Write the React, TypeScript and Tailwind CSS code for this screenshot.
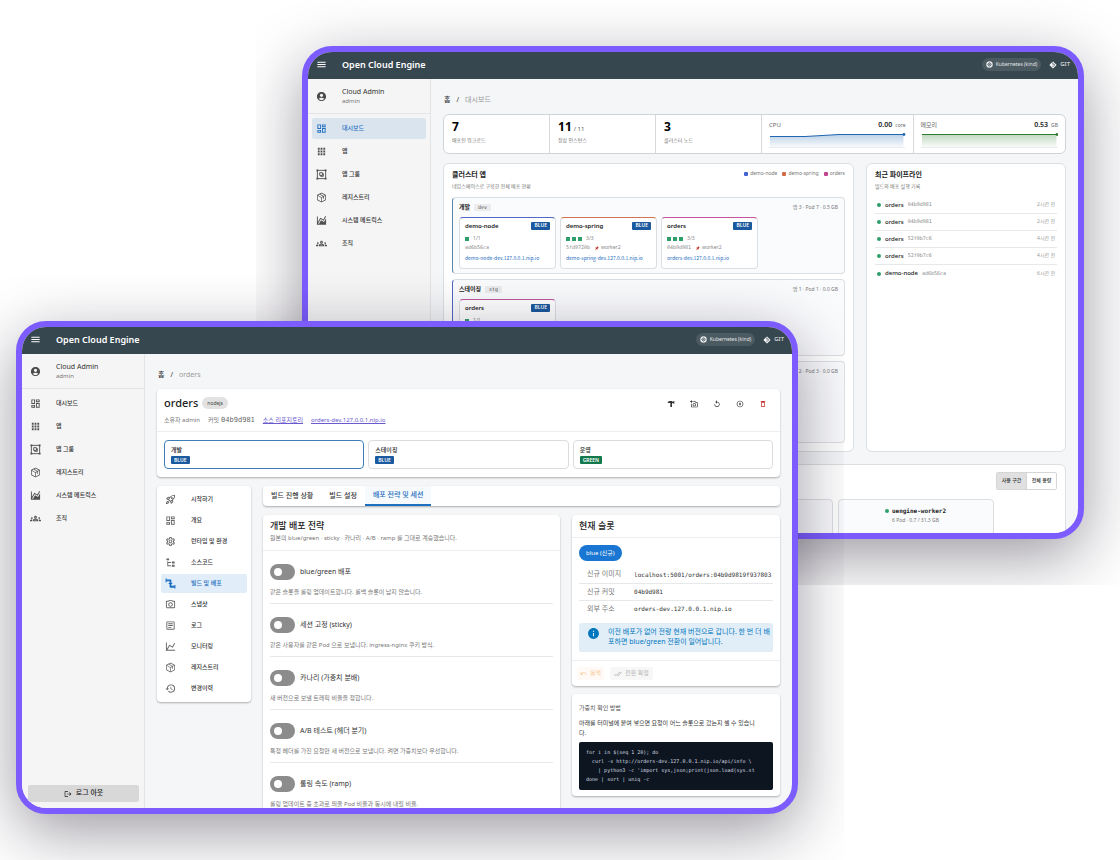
import type { ReactNode } from "react";
import { FaGitAlt } from "react-icons/fa";
import {
  MdAccountCircle,
  MdApps,
  MdDoneAll,
  MdHistory,
  MdInfo,
  MdLogout,
  MdMenu,
  MdOutlineAddAPhoto,
  MdOutlineArticle,
  MdOutlineDashboard,
  MdOutlineDelete,
  MdOutlineGroups,
  MdOutlinePhotoCamera,
  MdOutlineRocketLaunch,
  MdOutlineSettings,
  MdPauseCircleOutline,
  MdPushPin,
  MdReplay,
  MdUndo,
} from "react-icons/md";
import { PiPackage } from "react-icons/pi";

interface IconProps {
  size: number;
}

function PathIcon({ size, d }: IconProps & { d: string }) {
  return (
    <svg width={size} height={size} viewBox="0 0 24 24" fill="currentColor" aria-hidden="true">
      <path d={d} />
    </svg>
  );
}

const AreaIcon = ({ size }: IconProps) => (
  <PathIcon size={size} d="M17.45 15.18 22 7.31V21H2V3h2v12.54L9.5 6 16 9.78l4.24-7.33 1.73 1-5.23 9.05-6.51-3.75L4.31 19h2.26l4.39-7.56 6.49 3.74Z" />
);
const LineIcon = ({ size }: IconProps) => (
  <PathIcon size={size} d="m16 11.78 4.24-7.33 1.73 1-5.23 9.05-6.51-3.75L5.46 19H22v2H2V3h2v14.54L9.5 8l6.5 3.78Z" />
);
const TreeIcon = ({ size }: IconProps) => (
  <PathIcon size={size} d="M3 3h6v4H3V3m12 7h6v4h-6v-4m0 7h6v4h-6v-4m-2-4H7v5h6v2H5V9h2v2h6v2Z" />
);
const HammerIcon = ({ size }: IconProps) => (
  <PathIcon size={size} d="M1 8c3-4 6-5 11-5h3v2l7-2v8l-7-2v12h-5V9H7L1 8Z" />
);

function PipeIcon({ size }: IconProps) {
  return (
    <svg width={size} height={size} viewBox="0 0 24 24" fill="none" stroke="currentColor" aria-hidden="true">
      <path d="M3 5h9v14h9" strokeWidth="4" strokeLinejoin="round" />
      <path d="M2.500 1v8M21.500 15v8M8 12h8" strokeWidth="2.500" />
    </svg>
  );
}

function WheelIcon({ size }: IconProps) {
  return (
    <svg width={size} height={size} viewBox="0 0 24 24" aria-hidden="true">
      <circle cx="12" cy="12" r="11" fill="#eceff1" />
      <circle cx="12" cy="12" r="5" fill="none" stroke="#4c5a61" strokeWidth="2.500" />
      <path d="M12 3v18M3 12h18M6 6l12 12M18 6 6 18" stroke="#4c5a61" strokeWidth="1" />
    </svg>
  );
}

function GroupIcon({ size }: IconProps) {
  return (
    <svg width={size} height={size} viewBox="0 0 24 24" fill="none" stroke="currentColor" strokeWidth="2" aria-hidden="true">
      <path d="M3 3h18v18H3zM8 8h6v6H8zM14 10h2v6h-6v-2" />
      <path d="M1 1h4v4H1zM19 1h4v4h-4zM1 19h4v4H1zM19 19h4v4h-4z" fill="currentColor" stroke="none" />
    </svg>
  );
}

const NAV = [
  { label: "대시보드", Icon: MdOutlineDashboard },
  { label: "앱", Icon: MdApps },
  { label: "앱 그룹", Icon: GroupIcon },
  { label: "레지스트리", Icon: PiPackage },
  { label: "시스템 메트릭스", Icon: AreaIcon },
  { label: "조직", Icon: MdOutlineGroups },
];

const APP_MENU = [
  { label: "시작하기", Icon: MdOutlineRocketLaunch },
  { label: "개요", Icon: MdOutlineDashboard },
  { label: "런타임 및 환경", Icon: MdOutlineSettings },
  { label: "소스코드", Icon: TreeIcon },
  { label: "빌드 및 배포", Icon: PipeIcon, active: true },
  { label: "스냅샷", Icon: MdOutlinePhotoCamera },
  { label: "로그", Icon: MdOutlineArticle },
  { label: "모니터링", Icon: LineIcon },
  { label: "레지스트리", Icon: PiPackage },
  { label: "변경이력", Icon: MdHistory },
];

const PIPELINES = [
  { app: "orders", commit: "04b9d981", when: "2시간 전" },
  { app: "orders", commit: "04b9d981", when: "2시간 전" },
  { app: "orders", commit: "52f0b7c6", when: "4시간 전" },
  { app: "orders", commit: "52f0b7c6", when: "4시간 전" },
  { app: "demo-node", commit: "ad6b56ca", when: "6시간 전" },
];

const STRATEGIES = [
  { id: "bluegreen", label: "blue/green 배포", hint: "같은 슬롯을 롤링 업데이트합니다. 롤백 슬롯이 남지 않습니다." },
  { id: "sticky", label: "세션 고정 (sticky)", hint: "같은 사용자를 같은 Pod 으로 보냅니다. ingress-nginx 쿠키 방식." },
  { id: "canary", label: "카나리 (가중치 분배)", hint: "새 버전으로 보낼 트래픽 비율을 정합니다." },
  { id: "abtest", label: "A/B 테스트 (헤더 분기)", hint: "특정 헤더를 가진 요청만 새 버전으로 보냅니다. 켜면 가중치보다 우선합니다." },
  { id: "ramp", label: "롤링 속도 (ramp)", hint: "롤링 업데이트 중 초과로 띄울 Pod 비율과 동시에 내릴 비율." },
];

interface WindowProps {
  className: string;
  page: string;
  activeNav?: string;
  children: ReactNode;
}

function AppWindow({ className, page, activeNav, children }: WindowProps) {
  return (
    <div className={`absolute overflow-hidden p-[46px] ${className}`}>
      <div className="flex h-[493px] w-[782px] flex-col overflow-hidden rounded-[30px] border-6 border-[#7c5cff] bg-[#f4f6f8] shadow-[0_18px_64px_rgba(18,12,30,0.42)]">
        <header className="flex h-[27px] shrink-0 items-center bg-[#37474f] px-2 pb-[2px] text-white">
          <button type="button" aria-label="menu" className="w-[26px]">
            <MdMenu size={11} />
          </button>
          <h1 className="flex-1 text-[9px] font-semibold">Open Cloud Engine</h1>
          <span className="mr-2 flex h-[13px] items-center gap-[3px] rounded-full bg-[#4c5a61] px-1 text-[5px] text-gray-200">
            <WheelIcon size={7} />
            Kubernetes (kind)
          </span>
          <a href="#git" className="flex items-center gap-[3px] text-[6px] text-gray-100">
            <FaGitAlt size={8} />
            GIT
          </a>
        </header>
        <div className="flex min-h-0 flex-1">
          <aside className="flex w-[123px] shrink-0 flex-col border-r border-[#e3e4e6] bg-[#f5f5f5]">
            <div className="flex h-[35px] items-center border-b border-[#e3e4e6] pl-2">
              <span className="w-[26px] text-[#4c4c4c]">
                <MdAccountCircle size={11} />
              </span>
              <div className="pt-[1px]">
                <p className="text-[7px] leading-[10px] text-[#333]">Cloud Admin</p>
                <p className="text-[6px] leading-[9px] text-[#777]">admin</p>
              </div>
            </div>
            <nav className="flex flex-1 flex-col gap-[2px] p-1">
              {NAV.map(({ label, Icon }) => (
                <a
                  key={label}
                  href="#nav"
                  className={`flex h-[21px] items-center rounded-xs pl-1 text-[6px] font-medium ${
                    label === activeNav ? "bg-[#d9e4ef] text-[#1f6fc0]" : "text-[#333]"
                  }`}
                >
                  <span className={label === activeNav ? "w-[26px]" : "w-[26px] text-[#505050]"}>
                    <Icon size={11} />
                  </span>
                  {label}
                </a>
              ))}
            </nav>
            <button
              type="button"
              className="m-[6px] mr-[5px] flex h-[17px] items-center justify-center gap-1 rounded-xs bg-[#d8d8d8] text-[7px] font-medium text-[#222]"
            >
              <MdLogout size={8} />
              로그 아웃
            </button>
          </aside>
          <main className="flex min-w-0 flex-1 flex-col overflow-hidden px-3 pt-[13px]">
            <div className="mb-[6px] flex h-4 shrink-0 items-center gap-[6px] pl-[1px] text-[7px] text-[#333]">
              <a href="#home" className="font-medium">홈</a>
              <span>/</span>
              <span className="text-[#999]">{page}</span>
            </div>
            {children}
          </main>
        </div>
      </div>
    </div>
  );
}

function Slot({ color = "blue" }: { color?: "blue" | "green" }) {
  return (
    <span
      className={`inline-flex h-2 items-center rounded-[1px] px-[3px] text-[5px] font-semibold text-white ${
        color === "blue" ? "bg-[#1b5a9e]" : "bg-[#13794c]"
      }`}
    >
      {color === "blue" ? "BLUE" : "GREEN"}
    </span>
  );
}

interface AppCardProps {
  name: string;
  pods: number;
  commit: string;
  node?: string;
  host: string;
  accent: string;
}

function AppCard({ name, pods, commit, node, host, accent }: AppCardProps) {
  return (
    <article className={`flex h-[52px] w-[97px] flex-col rounded-sm border border-[#dcdfe2] bg-white px-[5px] pt-[3px] ${accent}`}>
      <div className="flex h-[10px] items-center justify-between">
        <h4 className="text-[6px] font-semibold text-[#222]">{name}</h4>
        <Slot />
      </div>
      <div className="mt-1 flex h-2 items-center gap-[2px]">
        {Array.from({ length: pods }, (_, i) => (
          <span key={i} className="size-1 bg-[#2e9e6b]" />
        ))}
        <span className="ml-[2px] text-[5px] text-[#888]">
          {pods}/{pods}
        </span>
      </div>
      <div className="flex h-[10px] items-center gap-1 text-[5px] text-[#888]">
        <span className="font-mono">{commit}</span>
        {node && (
          <span className="flex items-center gap-[2px]">
            <span className="rotate-45 text-[#c0392b]">
              <MdPushPin size={5} />
            </span>
            {node}
          </span>
        )}
      </div>
      <a href="#app" className="font-['Noto_Sans_CJK_KR',sans-serif] text-[5px] leading-[10px] text-[#1f6fc0]">
        {host}
      </a>
    </article>
  );
}

interface StageProps {
  name: string;
  code: string;
  summary: string;
  className: string;
  children?: ReactNode;
}

function Stage({ name, code, summary, className, children }: StageProps) {
  return (
    <section className={`rounded-sm border border-[#dcdfe2] bg-[#fafbfd] px-[6px] ${className}`}>
      <div className="flex h-[19px] items-center gap-1">
        <h3 className="text-[6px] font-bold text-[#222]">{name}</h3>
        <span className="rounded-[1px] bg-[#ececee] px-1 font-mono text-[5px] leading-[7px] text-[#555]">{code}</span>
        <span className="ml-auto text-[5px] text-[#777]">{summary}</span>
      </div>
      <div className="flex gap-1">{children}</div>
    </section>
  );
}

function Spark({ line, tone }: { line: string; tone: "blue" | "green" }) {
  const color = tone === "blue" ? "#1f66b0" : "#2e7d32";
  return (
    <svg className="h-[15px] w-full" viewBox="0 0 136 15" preserveAspectRatio="none" aria-hidden="true">
      <defs>
        <linearGradient id={`fade-${tone}`} x1="0" y1="0" x2="0" y2="1">
          <stop offset="0" stopColor={color} stopOpacity="0.3" />
          <stop offset="1" stopColor={color} stopOpacity="0.03" />
        </linearGradient>
      </defs>
      <path d={`M1 14V${line}V14Z`} fill={`url(#fade-${tone})`} />
      <path d="M0 14.5H136" stroke="#dde3e8" strokeWidth="0.6" />
      <path d={`M1 ${line}`} fill="none" stroke={color} strokeWidth="1" />
      <circle cx="134.500" cy="1.500" r="1.400" fill={color} />
    </svg>
  );
}

function Metric({ label, value, unit, children }: { label: string; value: string; unit: string; children: ReactNode }) {
  return (
    <div className="px-[7px] pt-[3px]">
      <div className="mb-[1px] flex h-[14px] items-center justify-between text-[6px] text-[#666]">
        <span>{label}</span>
        <span className="flex items-baseline gap-[3px] text-[5px]">
          <b className="text-[7px] font-semibold text-[#222]">{value}</b>
          {unit}
        </span>
      </div>
      {children}
    </div>
  );
}

function Count({ value, total, label }: { value: string; total?: string; label: string }) {
  return (
    <div className="px-2 pt-[3px]">
      <p className="flex h-[18px] items-baseline gap-[2px] text-[12px] leading-[18px] font-bold text-black">
        {value}
        {total && <span className="text-[6px] leading-none font-normal text-[#555]">/ {total}</span>}
      </p>
      <p className="text-[5px] leading-[9px] text-[#777]">{label}</p>
    </div>
  );
}

function Dashboard() {
  return (
    <>
      <section className="grid h-10 shrink-0 grid-cols-[7fr_7fr_7fr_10fr_10fr] divide-x divide-[#d6d9dc] rounded-md border border-[#cfd4d7] bg-white">
        <Count value="7" label="배포된 워크로드" />
        <Count value="11" total="11" label="정상 인스턴스" />
        <Count value="3" label="클러스터 노드" />
        <Metric label="CPU" value="0.00" unit="core">
          <Spark tone="blue" line="3.500H36L70 1.500H134" />
        </Metric>
        <Metric label="메모리" value="0.53" unit="GB">
          <Spark tone="green" line="1.500H134" />
        </Metric>
      </section>
      <div className="mt-[9px] flex shrink-0 gap-3">
        <section className="flex flex-1 flex-col gap-[5px] rounded-md border border-[#dcdfe2] bg-white px-2 pt-1 pb-2">
          <div className="mb-[1px] flex items-start justify-between">
            <div>
              <h2 className="text-[7px] leading-[13px] font-bold text-[#222]">클러스터 앱</h2>
              <p className="text-[5px] leading-[10px] text-[#777]">네임스페이스로 구획한 전체 배포 현황</p>
            </div>
            <ul className="flex gap-[5px] pt-[2px] text-[5px] text-[#777]">
              <li className="flex items-center gap-[2px]">
                <span className="size-1 rounded-[1px] bg-[#4763d3]" />
                demo-node
              </li>
              <li className="flex items-center gap-[2px]">
                <span className="size-1 rounded-[1px] bg-[#d36a45]" />
                demo-spring
              </li>
              <li className="flex items-center gap-[2px]">
                <span className="size-1 rounded-[1px] bg-[#c4458f]" />
                orders
              </li>
            </ul>
          </div>
          <Stage name="개발" code="dev" summary="앱 3 · Pod 7 · 0.5 GB" className="h-[77px] border-l-[#5d86ad]">
            <AppCard name="demo-node" pods={1} commit="ad6b56ca" host="demo-node-dev.127.0.0.1.nip.io" accent="border-t-[#5264c4]" />
            <AppCard name="demo-spring" pods={3} commit="5fd9720b" node="worker2" host="demo-spring-dev.127.0.0.1.nip.io" accent="border-t-[#cf7555]" />
            <AppCard name="orders" pods={3} commit="04b9d981" node="worker2" host="orders-dev.127.0.0.1.nip.io" accent="border-t-[#c4559c]" />
          </Stage>
          <Stage name="스테이징" code="stg" summary="앱 1 · Pod 1 · 0.0 GB" className="h-[77px] border-l-[#5264c4]">
            <AppCard name="orders" pods={1} commit="04b9d981" host="orders-stg.127.0.0.1.nip.io" accent="border-t-[#c4559c]" />
          </Stage>
          <Stage name="운영" code="prd" summary="앱 2 · Pod 3 · 0.0 GB" className="h-[82px] border-l-[#13794c]" />
        </section>
        <section className="w-[200px] rounded-md border border-[#dcdfe2] bg-white px-2 pt-1">
          <h2 className="text-[7px] leading-[13px] font-bold text-[#222]">최근 파이프라인</h2>
          <p className="text-[5px] leading-[10px] text-[#777]">빌드와 배포 실행 기록</p>
          <ul className="mt-[6px] divide-y divide-[#e6e8ea]">
            {PIPELINES.map((run, i) => (
              <li key={i} className="flex h-[17px] items-center gap-1 px-[2px] text-[6px]">
                <span className="size-1 rounded-full bg-[#2e9e6b]" />
                <span className="font-medium text-[#222]">{run.app}</span>
                <span className="font-mono text-[5px] text-[#888]">{run.commit}</span>
                <span className="ml-auto text-[5px] text-[#999]">{run.when}</span>
              </li>
            ))}
          </ul>
        </section>
      </div>
      <section className="mt-3 h-[120px] shrink-0 rounded-md border border-[#dcdfe2] bg-white px-2 pt-[7px]">
        <div className="flex justify-end">
          <div className="flex h-[18px] divide-x divide-[#d6d6d6] overflow-hidden rounded-xs border border-[#d6d6d6] text-[5px] font-medium text-[#333]">
            <button type="button" className="w-[30px] bg-[#e0e0e0]">사용 구간</button>
            <button type="button" className="w-[29px]">전체 용량</button>
          </div>
        </div>
        <div className="mt-[9px] flex h-[80px] justify-center gap-[5px]">
          <div className="w-[156px] rounded-sm border border-[#dcdfe2] bg-[#fafbfd]" />
          <div className="w-[156px] rounded-sm border border-[#dcdfe2] bg-[#fafbfd]" />
          <div className="w-[156px] rounded-sm border border-[#dcdfe2] bg-[#fafbfd] pt-[6px] text-center">
            <p className="flex items-center justify-center gap-[3px] font-mono text-[6px] leading-[10px] font-bold text-[#222]">
              <span className="size-1 rounded-full bg-[#2e9e6b]" />
              uengine-worker2
            </p>
            <p className="text-[5px] leading-[8px] text-[#777]">6 Pod · 0.7 / 31.3 GB</p>
          </div>
        </div>
      </section>
    </>
  );
}

const CARD = "rounded-sm bg-white shadow-[0_1px_2px_rgba(0,0,0,0.3)]";

function AppHeader() {
  return (
    <section className={`shrink-0 ${CARD}`}>
      <div className="flex h-[43px] items-start justify-between border-b border-[#eceef0] px-[7px] pt-[6px]">
        <div>
          <h2 className="flex items-center gap-1 text-[11px] leading-[16px] font-medium text-[#222]">
            orders
            <span className="rounded-full bg-[#e2e2e2] px-[5px] text-[5px] leading-3 font-normal text-[#444]">nodejs</span>
          </h2>
          <p className="mt-[3px] flex items-center gap-2 text-[6px] leading-[12px] text-[#777]">
            <span>소유자 admin</span>
            <span className="flex items-center gap-[2px]">
              커밋 <span className="font-mono text-[7px] text-[#666]">04b9d981</span>
            </span>
            <a href="#repo" className="text-[#6a5acd] underline">소스 리포지토리</a>
            <a href="#host" className="text-[#6a5acd] underline">orders-dev.127.0.0.1.nip.io</a>
          </p>
        </div>
        <div className="flex gap-[15px] px-[6px] pt-[5px] text-[#333]">
          <button type="button" aria-label="build"><HammerIcon size={8} /></button>
          <button type="button" aria-label="snapshot"><MdOutlineAddAPhoto size={8} /></button>
          <button type="button" aria-label="restart"><MdReplay size={8} /></button>
          <button type="button" aria-label="pause"><MdPauseCircleOutline size={8} /></button>
          <button type="button" aria-label="delete" className="text-[#c62828]"><MdOutlineDelete size={8} /></button>
        </div>
      </div>
      <div className="flex gap-1 px-[7px] py-2 text-left text-[6px] font-medium text-[#222]">
        <button type="button" className="flex h-[29px] flex-1 flex-col items-start rounded-sm border border-[#3f7fb8] px-[6px] pt-[3px] leading-[12px]">
          개발
          <Slot />
        </button>
        <button type="button" className="flex h-[29px] flex-1 flex-col items-start rounded-sm border border-[#dcdcdc] px-[6px] pt-[3px] leading-[12px]">
          스테이징
          <Slot />
        </button>
        <button type="button" className="flex h-[29px] flex-1 flex-col items-start rounded-sm border border-[#dcdcdc] px-[6px] pt-[3px] leading-[12px]">
          운영
          <Slot color="green" />
        </button>
      </div>
    </section>
  );
}

function Strategies() {
  return (
    <section className={`${CARD} flex-10`}>
      <div className="h-9 border-b border-[#eceef0] px-[7px] pt-1">
        <h3 className="text-[9px] leading-[13px] font-medium text-[#222]">개발 배포 전략</h3>
        <p className="text-[6px] leading-[12px] text-[#777]">
          원본의 blue/green · sticky · 카나리 · A/B · ramp 를 그대로 계승했습니다.
        </p>
      </div>
      <div className="divide-y divide-[#e6e8ea] px-[7px]">
        {STRATEGIES.map((s) => (
          <div key={s.id} className="h-[53px] pt-[13px]">
            <div className="flex h-4 items-center gap-[5px]">
              <input
                id={s.id}
                type="checkbox"
                role="switch"
                className="h-4 w-[25px] appearance-none rounded-full bg-[#8c8c8c] p-1 before:block before:size-2 before:rounded-full before:bg-white checked:bg-[#1976d2] checked:pl-[13px]"
              />
              <label htmlFor={s.id} className="text-[7px] leading-4 text-[#333]">{s.label}</label>
            </div>
            <p className="mt-2 text-[6px] leading-[8px] text-[#777]">{s.hint}</p>
          </div>
        ))}
      </div>
    </section>
  );
}

function CurrentSlot() {
  return (
    <section className={CARD}>
      <h3 className="h-[23px] border-b border-[#eceef0] px-[7px] text-[9px] leading-[21px] font-medium text-[#222]">현재 슬롯</h3>
      <div className="px-[7px] pt-[7px] pb-2">
        <span className="flex h-4 w-fit items-center rounded-full bg-[#1976d2] px-[7px] text-[6px] text-white">blue (신규)</span>
        <table className="mt-[5px] w-full table-fixed text-left text-[6px] text-[#333]">
          <tbody className="divide-y divide-[#e6e8ea]">
            <tr className="h-[17px]">
              <th className="w-[55px] pl-2 text-[7px] leading-[10px] font-normal text-[#777]">신규 이미지</th>
              <td className="overflow-hidden font-mono whitespace-nowrap">localhost:5001/orders:04b9d9819f937803</td>
            </tr>
            <tr className="h-[17px]">
              <th className="pl-2 text-[7px] leading-[10px] font-normal text-[#777]">신규 커밋</th>
              <td className="font-mono">04b9d981</td>
            </tr>
            <tr className="h-[17px]">
              <th className="pl-2 text-[7px] leading-[10px] font-normal text-[#777]">외부 주소</th>
              <td className="font-mono">orders-dev.127.0.0.1.nip.io</td>
            </tr>
          </tbody>
        </table>
        <div className="mt-[6px] flex h-[29px] gap-2 rounded-xs bg-[#e1eef8] pt-1 pl-2 text-[#0277bd]">
          <MdInfo size={13} />
          <p className="text-[7px] leading-[10px]">
            이전 배포가 없어 전량 현재 버전으로 갑니다. 한 번 더 배
            <br />
            포하면 blue/green 전환이 일어납니다.
          </p>
        </div>
      </div>
      <div className="flex h-[26px] items-center gap-[6px] border-t border-[#eceef0] px-[5px] text-[6px]">
        <button type="button" disabled className="flex h-[13px] items-center gap-[3px] rounded-xs bg-[#fffaf5] px-[3px] text-[#fbc9a0]">
          <MdUndo size={7} />
          롤백
        </button>
        <button type="button" disabled className="flex h-[13px] items-center gap-[3px] rounded-xs bg-[#f7f7f7] px-1 text-[#b4b4b4]">
          <MdDoneAll size={8} />
          전환 확정
        </button>
      </div>
    </section>
  );
}

function WeightCheck() {
  return (
    <section className={`${CARD} h-[102px] px-[7px] pt-[9px]`}>
      <h3 className="text-[6px] leading-[11px] text-[#555]">가중치 확인 방법</h3>
      <p className="mt-1 text-[6px] leading-[10px] text-[#333]">
        아래를 터미널에 붙여 넣으면 요청이 어느 슬롯으로 갔는지 셀 수 있습니
        <br />
        다.
      </p>
      <pre className="mt-1 overflow-hidden rounded-xs bg-[#0d1620] py-[6px] pl-[7px] font-mono text-[5px] leading-[9px] text-[#d5dbe1]">
{`for i in $(seq 1 20); do
  curl -s http://orders-dev.127.0.0.1.nip.io/api/info \\
    | python3 -c 'import sys,json;print(json.load(sys.st
done | sort | uniq -c`}
      </pre>
    </section>
  );
}

function AppDetail() {
  return (
    <>
      <AppHeader />
      <div className="mt-[9px] flex shrink-0 items-start gap-3">
        <nav className={`${CARD} flex w-[94px] shrink-0 flex-col gap-[2px] p-1`}>
          {APP_MENU.map(({ label, Icon, active }) => (
            <a
              key={label}
              href="#menu"
              className={`flex h-[19px] items-center rounded-xs pl-1 text-[6px] font-medium ${
                active ? "bg-[#e1edf8] text-[#1f6fc0]" : "text-[#333]"
              }`}
            >
              <span className={active ? "w-[26px]" : "w-[26px] text-[#666]"}>
                <Icon size={11} />
              </span>
              {label}
            </a>
          ))}
        </nav>
        <div className="min-w-0 flex-1">
          <div className={`${CARD} flex h-5 text-[7px] font-medium text-[#333]`}>
            <button type="button" className="px-2">빌드 진행 상황</button>
            <button type="button" className="px-2">빌드 설정</button>
            <button type="button" className="border-b-2 border-[#1f6fc0] bg-[#f6fafd] px-2 text-[#1f6fc0]">배포 전략 및 세션</button>
          </div>
          <div className="mt-[9px] flex items-start gap-3">
            <Strategies />
            <div className="flex min-w-0 flex-7 flex-col gap-2">
              <CurrentSlot />
              <WeightCheck />
            </div>
          </div>
        </div>
      </div>
    </>
  );
}

export default function App() {
  return (
    <div className="relative min-h-screen overflow-hidden bg-white font-['Noto_Sans','Noto_Sans_CJK_KR',sans-serif] [--font-mono:'DejaVu_Sans_Mono','Noto_Sans_CJK_KR',monospace]">
      <AppWindow className="top-0 left-[256px]" page="대시보드" activeNav="대시보드">
        <Dashboard />
      </AppWindow>
      <AppWindow className="top-[275px] left-[-30px]" page="orders">
        <AppDetail />
      </AppWindow>
    </div>
  );
}
